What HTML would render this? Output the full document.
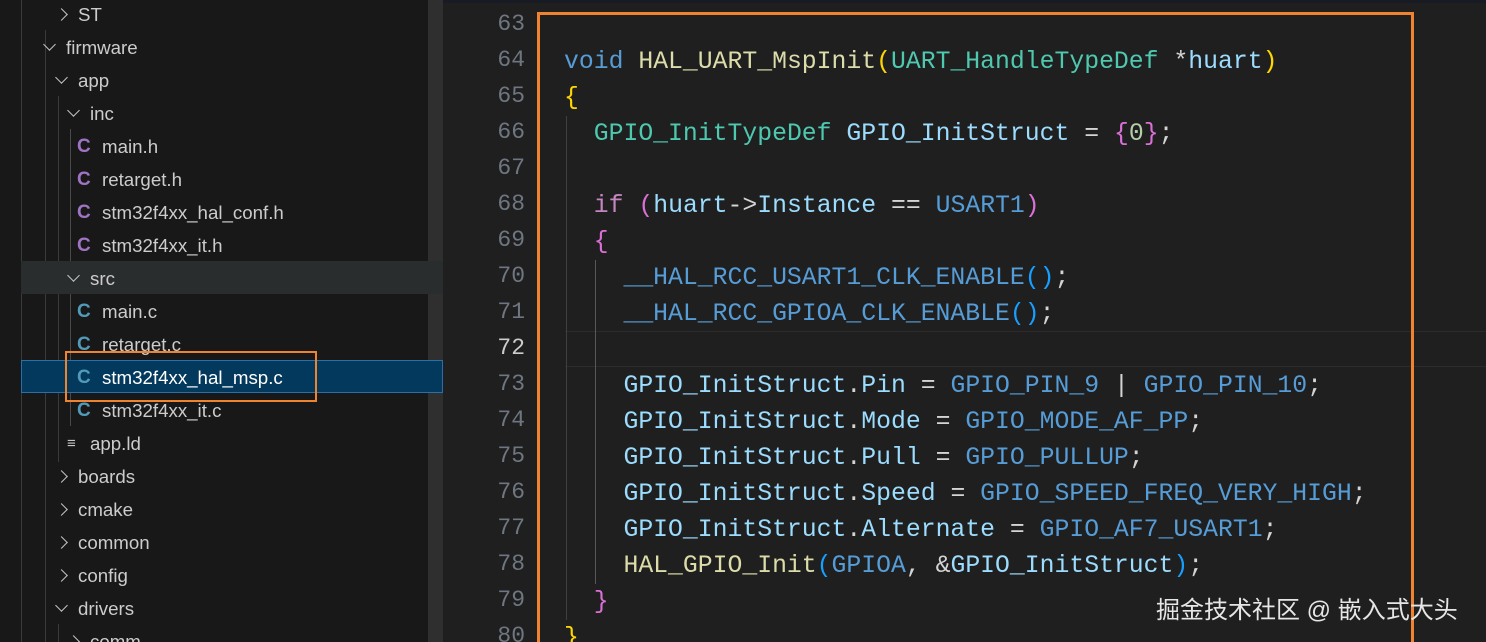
<!DOCTYPE html>
<html style="overflow:hidden;width:1486px;height:642px"><head><meta charset="utf-8"><style>
html,body{overflow:hidden}
body{margin:0;width:1486px;height:642px;overflow:hidden;background:#1f1f1f;position:relative;font-family:"Liberation Sans",sans-serif}
.side{position:absolute;left:0;top:0;width:443px;height:642px;background:#181818}
.sb{position:absolute;left:428px;top:0;width:15px;height:642px;background:#2f2f2f}
.row{position:absolute;left:0;height:33px;line-height:33px;font-size:18.7px;color:#cccccc;white-space:nowrap}
.chev{position:absolute;width:8px;height:8px;border-right:1.6px solid #c5c5c5;border-bottom:1.6px solid #c5c5c5}
.r{transform:rotate(-45deg)}.d{transform:rotate(45deg)}
.c{position:absolute;font-weight:bold;font-size:19px}
.g{position:absolute;width:1px;background:#3a3a3a}
.ed{position:absolute;left:443px;top:0;width:1043px;height:642px;background:#1f1f1f}
.ln{position:absolute;left:443px;width:82px;text-align:right;font-family:"Liberation Mono",monospace;font-size:23px;color:#6e7681;line-height:36px}
.cl{position:absolute;left:564px;font-family:"Liberation Mono",monospace;font-size:24.77px;line-height:36px;white-space:pre;color:#d4d4d4;margin-top:2px}
.k{color:#569cd6}.f{color:#dcdcaa}.t{color:#4ec9b0}.v{color:#9cdcfe}.m{color:#569cd6}.y{color:#ffd700}.p{color:#da70d6}.b{color:#179fff}.n{color:#b5cea8}.i{color:#c586c0}
</style></head><body>
<div class="side"></div>
<div class="sb"></div>
<div class="g" style="left:21px;top:0;height:642px"></div>
<div class="g" style="left:45px;top:30px;height:612px"></div>
<div class="g" style="left:58px;top:96px;height:366px"></div>
<div class="g" style="left:70px;top:129px;height:132px;background:#4a4a4a"></div>
<div class="g" style="left:70px;top:294px;height:132px;background:#4a4a4a"></div>
<div class="g" style="left:58px;top:624px;height:18px"></div>
<div style="position:absolute;left:21px;top:261px;width:422px;height:33px;background:#2a2d2e"></div>
<div style="position:absolute;left:21px;top:360px;width:420px;height:31px;background:#04395e;border:1px solid #2b6fa8"></div>

<div class="row" style="top:-2px"><span class="chev r" style="left:57px;top:12px"></span><span style="position:absolute;left:78px">ST</span></div>
<div class="row" style="top:31px"><span class="chev d" style="left:45px;top:9px"></span><span style="position:absolute;left:66px">firmware</span></div>
<div class="row" style="top:64px"><span class="chev d" style="left:57px;top:9px"></span><span style="position:absolute;left:78px">app</span></div>
<div class="row" style="top:97px"><span class="chev d" style="left:69px;top:9px"></span><span style="position:absolute;left:90px">inc</span></div>
<div class="row" style="top:130px"><span class="c" style="left:77px;color:#a074c4">C</span><span style="position:absolute;left:102px">main.h</span></div>
<div class="row" style="top:163px"><span class="c" style="left:77px;color:#a074c4">C</span><span style="position:absolute;left:102px">retarget.h</span></div>
<div class="row" style="top:196px"><span class="c" style="left:77px;color:#a074c4">C</span><span style="position:absolute;left:102px">stm32f4xx_hal_conf.h</span></div>
<div class="row" style="top:229px"><span class="c" style="left:77px;color:#a074c4">C</span><span style="position:absolute;left:102px">stm32f4xx_it.h</span></div>
<div class="row" style="top:262px"><span class="chev d" style="left:69px;top:9px"></span><span style="position:absolute;left:90px">src</span></div>
<div class="row" style="top:295px"><span class="c" style="left:77px;color:#519aba">C</span><span style="position:absolute;left:102px">main.c</span></div>
<div class="row" style="top:328px"><span class="c" style="left:77px;color:#519aba">C</span><span style="position:absolute;left:102px">retarget.c</span></div>
<div class="row" style="top:361px"><span class="c" style="left:77px;color:#519aba">C</span><span style="position:absolute;left:102px;color:#fff">stm32f4xx_hal_msp.c</span></div>
<div class="row" style="top:394px"><span class="c" style="left:77px;color:#519aba">C</span><span style="position:absolute;left:102px">stm32f4xx_it.c</span></div>
<div class="row" style="top:427px"><span style="position:absolute;left:67px;font-size:15px;color:#c5c5c5">&#8801;</span><span style="position:absolute;left:90px">app.ld</span></div>
<div class="row" style="top:460px"><span class="chev r" style="left:57px;top:12px"></span><span style="position:absolute;left:78px">boards</span></div>
<div class="row" style="top:493px"><span class="chev r" style="left:57px;top:12px"></span><span style="position:absolute;left:78px">cmake</span></div>
<div class="row" style="top:526px"><span class="chev r" style="left:57px;top:12px"></span><span style="position:absolute;left:78px">common</span></div>
<div class="row" style="top:559px"><span class="chev r" style="left:57px;top:12px"></span><span style="position:absolute;left:78px">config</span></div>
<div class="row" style="top:592px"><span class="chev d" style="left:57px;top:9px"></span><span style="position:absolute;left:78px">drivers</span></div>
<div class="row" style="top:625px"><span class="chev r" style="left:69px;top:12px"></span><span style="position:absolute;left:90px">comm</span></div>
<div style="position:absolute;left:65px;top:351px;width:248px;height:47px;border:2.5px solid #f0832f"></div>

<div class="ed"></div>
<div style="position:absolute;left:443px;top:0;width:1043px;height:3px;background:#181a24"></div>
<div style="position:absolute;left:565px;top:331px;width:921px;height:34px;border-top:1px solid #2c2c2c;border-bottom:1px solid #2c2c2c"></div>
<div style="position:absolute;left:566px;top:116px;width:1px;height:504px;background:#404040"></div>
<div style="position:absolute;left:595px;top:260px;width:1px;height:324px;background:#585858"></div>

<div class="ln" style="top:6px">63</div>
<div class="ln" style="top:42px">64</div>
<div class="ln" style="top:78px">65</div>
<div class="ln" style="top:114px">66</div>
<div class="ln" style="top:150px">67</div>
<div class="ln" style="top:186px">68</div>
<div class="ln" style="top:222px">69</div>
<div class="ln" style="top:258px">70</div>
<div class="ln" style="top:294px">71</div>
<div class="ln" style="top:330px;color:#cccccc">72</div>
<div class="ln" style="top:366px">73</div>
<div class="ln" style="top:402px">74</div>
<div class="ln" style="top:438px">75</div>
<div class="ln" style="top:474px">76</div>
<div class="ln" style="top:510px">77</div>
<div class="ln" style="top:546px">78</div>
<div class="ln" style="top:582px">79</div>
<div class="ln" style="top:618px">80</div>

<div class="cl" style="top:42px"><span class="k">void</span> <span class="f">HAL_UART_MspInit</span><span class="y">(</span><span class="t">UART_HandleTypeDef</span> *<span class="v">huart</span><span class="y">)</span></div>
<div class="cl" style="top:78px"><span class="y">{</span></div>
<div class="cl" style="top:114px">  <span class="t">GPIO_InitTypeDef</span> <span class="v">GPIO_InitStruct</span> = <span class="p">{</span><span class="n">0</span><span class="p">}</span>;</div>
<div class="cl" style="top:186px">  <span class="i">if</span> <span class="p">(</span><span class="v">huart</span>-&gt;<span class="v">Instance</span> == <span class="m">USART1</span><span class="p">)</span></div>
<div class="cl" style="top:222px">  <span class="p">{</span></div>
<div class="cl" style="top:258px">    <span class="m">__HAL_RCC_USART1_CLK_ENABLE</span><span class="b">()</span>;</div>
<div class="cl" style="top:294px">    <span class="m">__HAL_RCC_GPIOA_CLK_ENABLE</span><span class="b">()</span>;</div>
<div class="cl" style="top:366px">    <span class="v">GPIO_InitStruct</span>.<span class="v">Pin</span> = <span class="m">GPIO_PIN_9</span> | <span class="m">GPIO_PIN_10</span>;</div>
<div class="cl" style="top:402px">    <span class="v">GPIO_InitStruct</span>.<span class="v">Mode</span> = <span class="m">GPIO_MODE_AF_PP</span>;</div>
<div class="cl" style="top:438px">    <span class="v">GPIO_InitStruct</span>.<span class="v">Pull</span> = <span class="m">GPIO_PULLUP</span>;</div>
<div class="cl" style="top:474px">    <span class="v">GPIO_InitStruct</span>.<span class="v">Speed</span> = <span class="m">GPIO_SPEED_FREQ_VERY_HIGH</span>;</div>
<div class="cl" style="top:510px">    <span class="v">GPIO_InitStruct</span>.<span class="v">Alternate</span> = <span class="m">GPIO_AF7_USART1</span>;</div>
<div class="cl" style="top:546px">    <span class="f">HAL_GPIO_Init</span><span class="b">(</span><span class="m">GPIOA</span>, &amp;<span class="v">GPIO_InitStruct</span><span class="b">)</span>;</div>
<div class="cl" style="top:582px">  <span class="p">}</span></div>
<div class="cl" style="top:618px"><span class="y">}</span></div>

<div style="position:absolute;left:537px;top:12px;width:871px;height:627px;border:3px solid #f0832f;border-bottom:none"></div>
<div style="position:absolute;left:1156px;top:590px;font-family:'Liberation Sans','Noto Sans CJK SC',sans-serif;font-size:24px;color:#e6e6e6;white-space:nowrap">掘金技术社区 @ 嵌入式大头</div>
</body></html>
